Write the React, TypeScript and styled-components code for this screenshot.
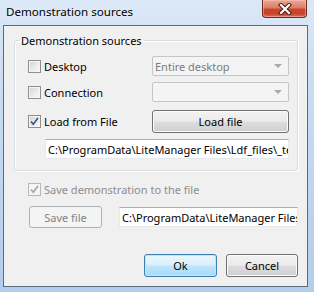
import { createGlobalStyle } from "styled-components";
import styled from "styled-components";

const GlobalStyle = createGlobalStyle`
    html, body {
        margin: 0;
        padding: 0;
        background: #ffffff;
    }
    body {
        font-family: "Noto Sans", "Open Sans", sans-serif;
        font-size: 11px;
        color: #000;
    }
`;

const Window = styled.div`
    width: 314px;
    height: 292px;
    box-sizing: border-box;
    display: flex;
    flex-direction: column;
    padding: 0 6px 5px 3px;
    background: linear-gradient(180deg, #dbe8f7 0%, #cadcf2 30%, #bdd3ee 70%, #b3cdec 100%);
    overflow: hidden;
`;

const TitleBar = styled.div`
    height: 25px;
    display: flex;
    align-items: flex-start;
    justify-content: space-between;
`;

const Title = styled.span`
    padding: 4px 0 0 3px;
    font-size: 11.6px;
    color: #000;
    text-shadow: 0 0 6px rgba(255, 255, 255, 0.9);
`;

const CloseButton = styled.div`
    width: 45px;
    height: 18px;
    margin-right: 1px;
    box-sizing: border-box;
    display: flex;
    align-items: center;
    justify-content: center;
    border: 1px solid #6e2a21;
    border-top: none;
    border-radius: 0 0 4px 4px;
    background: linear-gradient(180deg, #e9a796 0%, #dd7d66 45%, #c8472b 55%, #c7432a 80%, #d9725a 100%);
    box-shadow: inset 0 0 0 1px rgba(255, 210, 200, 0.45);
`;

const Client = styled.div`
    flex: 1;
    display: flex;
    flex-direction: column;
    background: #f0f0f0;
    border: 1px solid #5b6b7e;
    padding: 7px 9px 8px 10px;
`;

const Group = styled.fieldset`
    margin: 0;
    padding: 8px 8px 11px 13px;
    border: 1px solid #d5dfe5;
    border-radius: 3px;
    box-shadow: inset 1px 1px 0 #fff, 1px 1px 0 #fff;
    display: flex;
    flex-direction: column;
`;

const Legend = styled.legend`
    padding: 0 2px;
    margin-left: -9px;
    line-height: 15px;
`;

const SourceRow = styled.div<{ $h: number; $gap: number }>`
    height: ${(p) => p.$h}px;
    margin-bottom: ${(p) => p.$gap}px;
    display: grid;
    grid-template-columns: 1fr 137px;
    align-items: center;
`;

const CheckLabel = styled.label<{ $disabled?: boolean }>`
    display: flex;
    align-items: center;
    gap: 3px;
    color: ${(p) => (p.$disabled ? "#8d8d8d" : "#000")};
    line-height: 15px;
`;

const Box = styled.span<{ $disabled?: boolean }>`
    width: 13px;
    height: 13px;
    box-sizing: border-box;
    border: 1px solid ${(p) => (p.$disabled ? "#b8b8b8" : "#8e8f8f")};
    background: ${(p) =>
        p.$disabled
            ? "#f4f4f4"
            : "linear-gradient(135deg, #d2d2d2 0%, #ececec 60%, #fbfbfb 100%)"};
    box-shadow: inset 0 0 0 1px #f4f4f4;
    display: flex;
    align-items: center;
    justify-content: center;
`;

const Combo = styled.div`
    height: 20px;
    box-sizing: border-box;
    border: 1px solid #c5c5c5;
    border-radius: 2px;
    background: #f4f4f4;
    color: #7a7a7a;
    display: flex;
    align-items: center;
    justify-content: space-between;
    padding: 0 6px 0 2px;
`;

const Arrow = styled.span`
    width: 0;
    height: 0;
    border-left: 4px solid transparent;
    border-right: 4px solid transparent;
    border-top: 4px solid #a9a9a9;
`;

const Button = styled.div<{ $w?: number; $h?: number; $disabled?: boolean; $default?: boolean }>`
    width: ${(p) => (p.$w ? `${p.$w}px` : "auto")};
    height: ${(p) => p.$h ?? 23}px;
    box-sizing: border-box;
    border: 1px solid ${(p) => (p.$disabled ? "#adb2b5" : p.$default ? "#3c7fb1" : "#707070")};
    border-radius: 3px;
    display: flex;
    align-items: center;
    justify-content: center;
    color: ${(p) => (p.$disabled ? "#838383" : "#000")};
    background: ${(p) =>
        p.$disabled
            ? "#f4f4f4"
            : p.$default
            ? "linear-gradient(180deg, #eaf6fd 0%, #d9f0fc 48%, #bee6fd 52%, #a7d9f5 100%)"
            : "linear-gradient(180deg, #f2f2f2 0%, #ebebeb 48%, #dddddd 52%, #cfcfcf 100%)"};
    box-shadow: inset 0 0 0 1px ${(p) => (p.$disabled ? "#f4f4f4" : p.$default ? "#c0e5f9" : "#fcfcfc")};
`;

const PathField = styled.div<{ $w: number }>`
    width: ${(p) => p.$w}px;
    height: 20px;
    box-sizing: border-box;
    background: #fff;
    border: 1px solid #e3e9ef;
    border-top-color: #abadb3;
    padding: 0 0 0 2px;
    display: flex;
    align-items: center;
    white-space: nowrap;
    overflow: hidden;
`;

const PathRow = styled.div`
    display: flex;
    justify-content: flex-end;
`;

const SaveSection = styled.div`
    display: flex;
    flex-direction: column;
    padding: 11px 0 0 14px;
    gap: 9px;
`;

const SaveRow = styled.div`
    display: flex;
    align-items: center;
    justify-content: space-between;
    padding-left: 1px;
`;

const Footer = styled.div`
    margin-top: auto;
    margin-bottom: 1px;
    display: flex;
    justify-content: flex-end;
    gap: 9px;
`;

const Check = ({ disabled }: { disabled?: boolean }) => (
    <svg width="9" height="9" viewBox="0 0 9 9">
        <path
            d="M1 4.5 L3.3 7.2 L8 1"
            fill="none"
            stroke={disabled ? "#a3a3a3" : "#3a4f8f"}
            strokeWidth="1.6"
        />
    </svg>
);

const CheckBox = ({
    label,
    checked,
    disabled,
}: {
    label: string;
    checked?: boolean;
    disabled?: boolean;
}) => (
    <CheckLabel $disabled={disabled}>
        <Box $disabled={disabled}>{checked && <Check disabled={disabled} />}</Box>
        {label}
    </CheckLabel>
);

export default function App() {
    const path = "C:\\ProgramData\\LiteManager Files\\Ldf_files\\_test.ldf";
    return (
        <>
            <GlobalStyle />
            <Window>
                <TitleBar>
                    <Title>Demonstration sources</Title>
                    <CloseButton>
                        <svg width="14" height="12" viewBox="0 0 14 12">
                            <path
                                d="M3 2 L11 10 M11 2 L3 10"
                                stroke="#4a1a12"
                                strokeWidth="4.2"
                                strokeLinecap="square"
                            />
                            <path
                                d="M3 2 L11 10 M11 2 L3 10"
                                stroke="#ffffff"
                                strokeWidth="2.2"
                                strokeLinecap="square"
                            />
                        </svg>
                    </CloseButton>
                </TitleBar>
                <Client>
                    <Group>
                        <Legend>Demonstration sources</Legend>
                        <SourceRow $h={20} $gap={6}>
                            <CheckBox label="Desktop" />
                            <Combo>
                                Entire desktop
                                <Arrow />
                            </Combo>
                        </SourceRow>
                        <SourceRow $h={20} $gap={8}>
                            <CheckBox label="Connection" />
                            <Combo>
                                <span />
                                <Arrow />
                            </Combo>
                        </SourceRow>
                        <SourceRow $h={23} $gap={6}>
                            <CheckBox label="Load from File" checked />
                            <Button>Load file</Button>
                        </SourceRow>
                        <PathRow>
                            <PathField $w={244}>{path}</PathField>
                        </PathRow>
                    </Group>
                    <SaveSection>
                        <CheckBox label="Save demonstration to the file" checked disabled />
                        <SaveRow>
                            <Button $w={73} $h={22} $disabled>
                                Save file
                            </Button>
                            <PathField $w={179}>{path}</PathField>
                        </SaveRow>
                    </SaveSection>
                    <Footer>
                        <Button $w={73} $default>
                            Ok
                        </Button>
                        <Button $w={72}>Cancel</Button>
                    </Footer>
                </Client>
            </Window>
        </>
    );
}
